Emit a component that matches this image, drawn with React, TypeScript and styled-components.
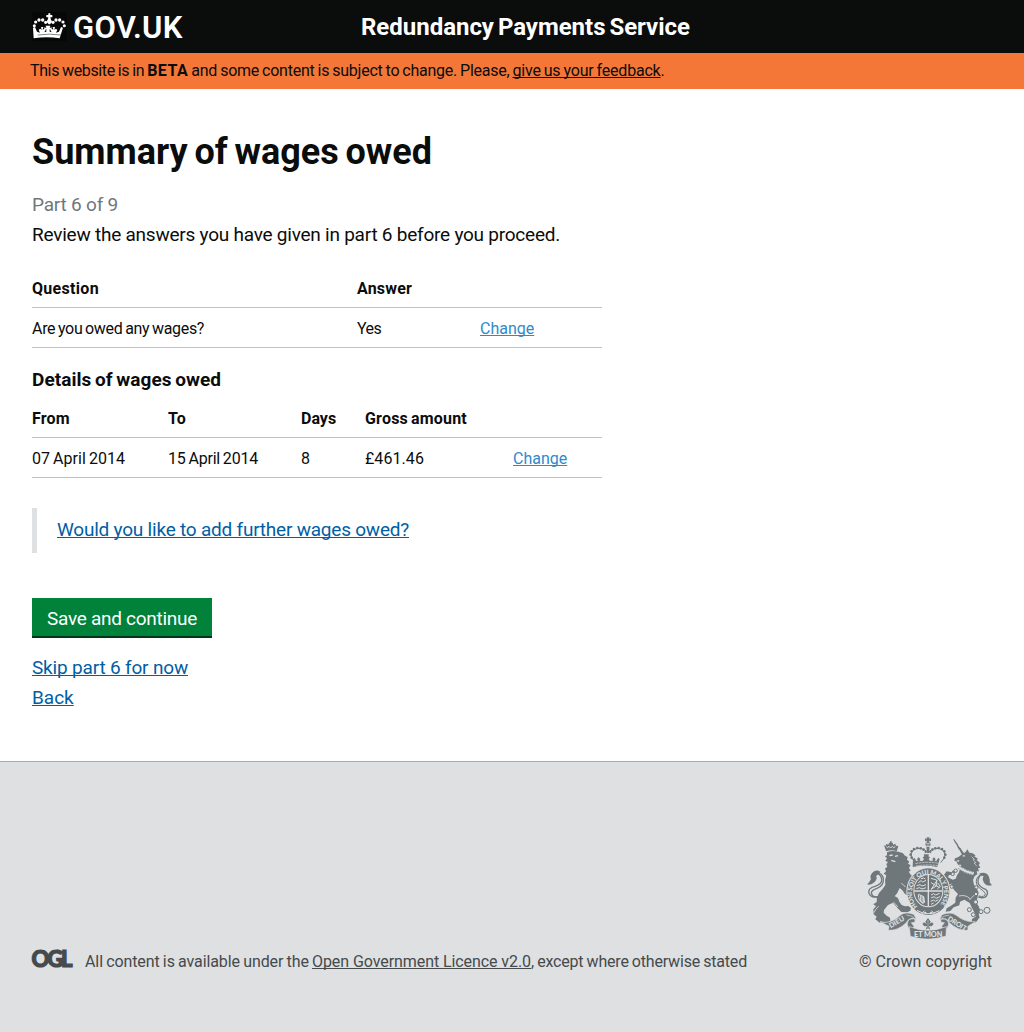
import React from 'react';
import styled, { createGlobalStyle } from 'styled-components';

const INK = '#0b0c0c';
const FONT = 'Roboto, "Liberation Sans", Arial, sans-serif';

const GlobalStyle = createGlobalStyle`
  * { box-sizing: border-box; }
  html { background: #dee0e2; }
  body { margin: 0; background: #fff; color: ${INK}; font: 16px/20px ${FONT}; }
  h1, h2, p { margin: 0; }
  a { text-decoration: underline; text-decoration-thickness: 1px; text-decoration-skip-ink: none; text-underline-offset: 1px; }
`;

const Tracked = styled.span<{ $ls?: number; $ws?: number }>`
  letter-spacing: ${(p) => p.$ls ?? 0}px;
  word-spacing: ${(p) => p.$ws ?? 0}px;
  white-space: pre;
`;

const Header = styled.header`
  display: grid;
  grid-template-columns: 329px 1fr;
  height: 53px;
  padding-left: 32px;
  background: ${INK};
  color: #fff;
`;
const Logo = styled.a`
  display: flex;
  gap: 6px;
  padding-top: 12px;
  color: #fff;
  && { text-decoration: none; }
`;
const LogoText = styled.span`
  padding-top: 1px;
  font-size: 31px;
  line-height: 30px;
  font-weight: 600;
  letter-spacing: 0.3px;
`;
const ServiceName = styled.div`
  padding-top: 12px;
  font-size: 24px;
  line-height: 30px;
  font-weight: 700;
`;

const BetaBar = styled.div`
  height: 36px;
  padding: 8px 30px;
  background: #f47738;
  a { color: ${INK}; }
  strong { letter-spacing: 0.45px; }
`;

const Main = styled.main`
  width: 634px;
  height: 672px;
  padding: 43px 0 0 32px;
`;
const Title = styled.h1`
  font-size: 36px;
  line-height: 40px;
`;
const Para = styled.p<{ $muted?: boolean }>`
  font-size: 19px;
  line-height: 30px;
  color: ${(p) => (p.$muted ? '#6f777b' : INK)};
`;
const Intro = styled.div`
  padding: 18px 0;
`;
const Table = styled.table`
  width: 570px;
  table-layout: fixed;
  border-collapse: separate;
  border-spacing: 0;
`;
const Cell = styled.td`
  height: 40px;
  padding: 11px 0 8px;
  border-bottom: 1px solid #bfc1c3;
  text-align: left;
  font-weight: 400;
  vertical-align: top;
  white-space: nowrap;
`;
const HeadCell = styled(Cell)`
  font-weight: 700;
`;
const ChangeLink = styled.a`
  color: #2e8aca;
`;
const SubTitle = styled.h2`
  padding: 22px 0 8px;
  font-size: 19px;
  line-height: 20px;
`;
const Inset = styled.div`
  height: 45px;
  margin: 30px 0 45px;
  padding: 7px 0 0 20px;
  border-left: 5px solid #dee0e2;
  font-size: 19px;
  line-height: 30px;
`;
const BodyLink = styled.a`
  color: #005ea5;
`;
const Button = styled.button`
  display: block;
  width: 180px;
  height: 40px;
  margin: 0 0 15px;
  padding: 4px 0 0 15px;
  border: 0;
  border-bottom: 2px solid #003618;
  background: #00823b;
  color: #fff;
  font: 19px/34px ${FONT};
  text-align: left;
`;

const Footer = styled.footer`
  display: flex;
  justify-content: space-between;
  align-items: flex-end;
  height: 271px;
  padding: 0 32px 59px;
  border-top: 1px solid #a1acb2;
  background: #dee0e2;
  color: #454a4c;
  a { color: #454a4c; }
`;
const Licence = styled.div`
  display: flex;
  align-items: center;
  gap: 12px;
  height: 22px;
`;
const Copyright = styled.div`
  display: flex;
  flex-direction: column;
  align-items: flex-end;
  gap: 13px;
  height: 136px;
`;

const Block = styled.svg`
  display: block;
  flex: none;
`;
const Ogl = styled(Block)`
  margin-bottom: 4px;
  overflow: visible;
`;

const mirror = (cx: number, pts: number[][]) =>
  pts.flatMap(([x, y, r]) => [[x, y, r], [2 * cx - x, y, r]]);

function Crown() {
  const dots = mirror(88, [[43, 77, 4.6], [47, 66, 4.8], [57, 60, 5], [68, 60, 5], [77, 67, 4.8]]);
  return (
    <Block width="35" height="29" viewBox="36 36 105 87">
      <rect x="36" y="36" width="105" height="87" fill="#070707" />
      <g fill="#fff">
        {dots.map(([x, y, r], i) => <circle key={i} cx={x} cy={y} r={r} />)}
        <path d="M85 40h6v5h6v7h-6l2 7q4 3 2 8l-5 6h-4l-5-6q-2-5 2-8l2-7h-6v-7h6z" />
        <path d="M39 83l6-2 6 14 9 3-4-8 4-4 5 3-2-8h7l-2 8 5-3 4 4-4 7 6-2v-7l-6 2v-8l6 2-2-7h14l-2 7 6-2v8l-6-2v7l6 2-4-7 4-4 5 3-2-8h7l-2 8 5-3 4 4-4 8 9-3 6-14 6 2-10 32q-39-7-78 0z" />
      </g>
      <path d="M53 105q35-5 70 0" fill="none" stroke="#0b0c0c" strokeWidth="1.5" />
    </Block>
  );
}

function OglMark() {
  return (
    <Ogl width="41" height="18" viewBox="0 0 41 18">
      <text x="-0.4" y="16.4" fontFamily="Lato, sans-serif" fontWeight="900" fontSize="22" textLength="41" lengthAdjust="spacing" fill="#454a4c" stroke="#454a4c" strokeWidth="1.2">OGL</text>
    </Ogl>
  );
}

function Arms() {
  const G = '#6f777b';
  const L = '#dee0e2';
  const arch = mirror(219, [[170, 98, 4], [167, 89, 4], [170, 79, 4], [177, 72, 4], [187, 69, 4], [197, 70, 4], [206, 74, 4], [212, 81, 3.5]]);
  const motto = { fontFamily: 'Lato, sans-serif', fontWeight: 900, fill: L };
  return (
    <Block width="125" height="102" viewBox="36 36 375 306" fill={G}>
      <defs>
        <path id="garter" d="M188 245A48 55 0 1 1 250 245" />
      </defs>

      {/* lion */}
      <path d="M93 77L87 61l6 1 1-6 6 3 2-6h3v-4h5v4h3l2 6 6-3 2 6 7 1-5 16q-15-6-32 0z" />
      <path d="M94 65l4 3 4-4 5 5 5-5 4 4 5-3" fill="none" stroke={L} strokeWidth="3" />
      <path d="M96 82Q112 74 132 81L143 84 150 92 158 96 156 104 163 110 159 116 167 121 162 128 167 137 161 140 168 150 176 157 165 162 172 169 180 177 171 180 177 189 166 185 162 190 168 195 173 202 163 204 160 212 150 207 142 196 134 189Q128 205 119 214Q131 217 132 229L140 240 150 244 160 243 168 249 166 257 157 262 139 261 127 248 114 233 99 240 87 255 86 263 95 272 105 278 106 287 98 292 84 291 74 293 61 283 65 275 56 268 55 253 63 244 55 238 65 231 66 218Q70 203 82 193L91 180Q88 165 94 151L86 146 93 139 90 130 97 126 94 117 99 112 91 107 96 100 90 94 96 91z" />
      <path d="M57 263q4-12 14-19M115 231q8 6 13 15M151 186q-6-8-12-11" fill="none" stroke={L} strokeWidth="2.5" />
      <path d="M103 92l10-2M120 94l9-2M109 106l12 4" stroke={L} strokeWidth="4" />
      <path d="M71 214Q48 221 42 205Q37 190 60 184Q82 177 80 163Q78 147 65 145Q53 147 54 160" fill="none" stroke={G} strokeWidth="4" />
      <path d="M71 216Q50 218 49 203Q51 195 66 190Q87 183 85 161Q81 143 65 143" fill="none" stroke={G} strokeWidth="4" />
      <path d="M76 140Q63 132 52 143Q43 153 48 162Q43 174 36 178Q48 182 58 172Q69 160 63 153Q73 147 76 140z" />

      {/* unicorn */}
      <path d="M294 41l5 3 5 8 4 5 4 8 5 5 5 8 7 9-8 2-7-13-5-6-4-10-5-7-4-8z" />
      <path d="M321 88L332 81 337 73 343 83 351 84 362 91 358 94 369 101 365 105 375 114 371 119 376 128 369 130 372 139 365 139 367 148 359 153 354 165 357 179 365 190 371 203 367 220 363 232 371 244 376 257 371 268 374 277 363 292 350 293 351 282 362 275 358 262 351 249 344 234 328 224 315 230 313 241 296 247 286 258 272 260 275 250 288 242 301 233 302 218 309 207 298 196 291 185 278 194 268 187 276 176 281 170 267 162 267 149 275 139 290 142 294 136 302 141 292 149 282 150 279 157 293 164 302 161 306 151 312 142 316 128 319 119 309 119 304 109 298 108 300 100 309 97z" />
      <path d="M311 127q19 13 45 19" fill="none" stroke={L} strokeWidth="10" />
      <path d="M309 130q20 14 47 19M313 123q18 13 45 19" fill="none" stroke={G} strokeWidth="2.5" strokeDasharray="5 3" />
      <path d="M323 93l5-3 1 4zM306 107l6-1-2 5zM350 95l8 8-4 1 9 9-6 1 9 10" fill="none" stroke={L} strokeWidth="2" />
      <path d="M287 153l9 2M281 181l9-4M312 213q20-5 33 8M343 225l20-20" fill="none" stroke={L} strokeWidth="2.5" />
      <path d="M370 216Q393 223 397 207Q400 195 385 190Q367 181 369 166Q372 149 384 148Q395 148 393 159" fill="none" stroke={G} strokeWidth="4" />
      <path d="M371 213Q390 218 391 206Q386 197 376 191Q360 179 365 162Q371 147 386 148" fill="none" stroke={G} strokeWidth="3" />
      <path d="M372 146Q392 138 401 153Q406 166 404 172L411 181Q394 184 387 173Q380 162 386 154Q377 153 372 146z" />
      <g fill={L} stroke={G} strokeWidth="3">
        <circle cx="302" cy="137" r="5" /><circle cx="293" cy="147" r="5" /><circle cx="290" cy="185" r="5" />
        <circle cx="364" cy="187" r="5" /><circle cx="363" cy="207" r="5" /><circle cx="362" cy="231" r="6" />
        <circle cx="343" cy="254" r="6" /><circle cx="355" cy="269" r="6" /><circle cx="378" cy="260" r="6" /><circle cx="396" cy="256" r="9" />
      </g>

      {/* royal crown */}
      <path d="M215 37h9l-2 5 6-2v9l-6-2 1 4q6 4 3 11h-14q-3-7 3-11l1-4-6 2v-9l6 2z" />
      <path d="M213 55h13M219 55v7" stroke={L} strokeWidth="2" />
      <path d="M181 113Q158 89 176 75Q197 62 219 82Q241 62 262 75Q280 89 257 113" fill="none" stroke={G} strokeWidth="3" />
      {arch.map(([x, y, r], i) => <circle key={i} cx={x} cy={y} r={r} />)}
      <path d="M214 65h10l-2 19h-6z" />
      <path d="M174 103l4-5 6 10 5-1-3-5 5-5 5 5-2 5 8 1 5-5-4-6 5-3-2-6h16l-2 6 5 3-4 6 5 5 8-1-2-5 5-5 5 5-3 5 5 1 6-10 4 5-7 23q-37-7-74 0z" />
      <path d="M181 116q38-8 76 0M183 123q36-6 72 0" fill="none" stroke={L} strokeWidth="2" strokeDasharray="8 2" />

      {/* garter and shield */}
      <ellipse cx="220" cy="200" rx="66" ry="73" fill={L} />
      <ellipse cx="220" cy="200" rx="63" ry="70" />
      <ellipse cx="220" cy="197" rx="45" ry="50" fill={L} />
      <ellipse cx="220" cy="197" rx="42" ry="47" />
      <text {...motto} fontSize="19"><textPath href="#garter" textLength="245">HONI SOIT QUI MAL Y PENSE</textPath></text>
      <path d="M220 150v94M178 198h84" stroke={L} strokeWidth="4" />
      <g fill="none" stroke={L} strokeWidth="3">
        <path d="M190 173l8-6 5 4 10-5M185 182l10-3 6 4 12-4M184 191l9-3 8 4 12-4M198 161l8-2 5 3" />
        <path d="M228 160l17 5v17l-17 11M229 193l17-27M228 173l26 15M247 192l9-8-8-10" />
        <path d="M190 208q-1 20 15 28M191 208l15 7 3 18M196 211v18M201 213v21M205 215v20" />
        <path d="M228 210l8-4 6 4 12-5M228 219l9-4 6 5 12-5M227 229l9-4 5 4 9-5M228 238l8-4" />
      </g>
      <path d="M186 256q32 20 67 1M200 267l8-10M238 267l-8-10" stroke={L} fill="none" strokeWidth="3" />
      <circle cx="211" cy="263" r="3" fill={L} /><circle cx="228" cy="263" r="3" fill={L} />

      {/* ribbon */}
      <g stroke={L} strokeWidth="2">
        <path d="M159 288Q166 278 181 283L179 292 169 293 177 304 168 321 161 309Q154 298 159 288z" />
        <path d="M279 288Q270 278 256 283L259 292 268 293 260 304 269 321 276 309Q284 298 279 288z" />
        <path d="M75 290Q105 299 136 271Q150 258 176 268L184 282Q164 274 153 294Q130 317 100 316L102 304z" />
        <path d="M361 290Q331 293 304 271Q287 258 261 269L254 283Q273 275 284 294Q308 317 338 316L340 303z" />
        <path d="M163 305Q219 327 274 305L273 333Q219 351 166 334z" />
      </g>
      <path d="M154 270q14 0 24 9M283 270q-15 1-24 9" fill="none" stroke={L} strokeWidth="2" />
      <text {...motto} fontSize="21" transform="translate(107 310) rotate(-30)" textLength="50">DIEU</text>
      <text {...motto} fontSize="22" x="177" y="336" textLength="85">ET MON</text>
      <text {...motto} fontSize="21" transform="translate(276 285) rotate(32)" textLength="63">DROIT</text>
      <path d="M219 279l8 11-4 7 8-5 5 5-6 7-8-1 4 11-7-4-7 4 4-11-8 1-6-7 5-5 8 5-4-7z" />
      <path d="M219 285v24" stroke={L} strokeWidth="1.5" />
    </Block>
  );
}

export default function App() {
  return (
    <>
      <GlobalStyle />
      <Header>
        <Logo><Crown /><LogoText>GOV.UK</LogoText></Logo>
        <ServiceName><Tracked $ls={-0.02} $ws={-2}>Redundancy Payments Service</Tracked></ServiceName>
      </Header>
      <BetaBar>
        <Tracked $ls={-0.37} $ws={-0.6}>This website is in </Tracked>
        <strong>BETA</strong>
        <Tracked $ls={-0.25} $ws={-0.65}> and some content is subject to change. Please, </Tracked>
        <a><Tracked $ls={-0.2} $ws={-0.7}>give us your feedback</Tracked></a>.
      </BetaBar>
      <Main>
        <Title><Tracked $ws={-2.1}>Summary of wages owed</Tracked></Title>
        <Intro>
          <Para $muted><Tracked $ls={-0.2}>Part 6 of 9</Tracked></Para>
          <Para><Tracked $ls={-0.234}>Review the answers you have given in part 6 before you proceed.</Tracked></Para>
        </Intro>
        <Table>
          <colgroup><col width="325" /><col width="123" /><col width="122" /></colgroup>
          <tbody>
            <tr>
              <HeadCell as="th"><Tracked $ls={0.3}>Question</Tracked></HeadCell>
              <HeadCell as="th"><Tracked $ls={0.18}>Answer</Tracked></HeadCell>
              <HeadCell />
            </tr>
            <tr>
              <Cell><Tracked $ls={-0.31} $ws={-1}>Are you owed any wages?</Tracked></Cell>
              <Cell><Tracked $ls={-0.5}>Yes</Tracked></Cell>
              <Cell><ChangeLink>Change</ChangeLink></Cell>
            </tr>
          </tbody>
        </Table>
        <SubTitle><Tracked $ls={0.05} $ws={-1.1}>Details of wages owed</Tracked></SubTitle>
        <Table>
          <colgroup><col width="136" /><col width="133" /><col width="64" /><col width="148" /><col width="89" /></colgroup>
          <tbody>
            <tr>
              <HeadCell as="th"><Tracked $ls={0.2}>From</Tracked></HeadCell>
              <HeadCell as="th"><Tracked $ls={0.2}>To</Tracked></HeadCell>
              <HeadCell as="th">Days</HeadCell>
              <HeadCell as="th"><Tracked $ls={0.2} $ws={-1.2}>Gross amount</Tracked></HeadCell>
              <HeadCell />
            </tr>
            <tr>
              <Cell><Tracked $ls={0.04} $ws={-1}>07 April 2014</Tracked></Cell>
              <Cell><Tracked $ls={-0.19} $ws={-1}>15 April 2014</Tracked></Cell>
              <Cell>8</Cell>
              <Cell><Tracked $ls={0.07}>£461.46</Tracked></Cell>
              <Cell><ChangeLink>Change</ChangeLink></Cell>
            </tr>
          </tbody>
        </Table>
        <Inset><BodyLink><Tracked $ls={-0.219}>Would you like to add further wages owed?</Tracked></BodyLink></Inset>
        <Button><Tracked $ls={-0.28}>Save and continue</Tracked></Button>
        <Para><BodyLink><Tracked $ls={-0.176}>Skip part 6 for now</Tracked></BodyLink></Para>
        <Para><BodyLink>Back</BodyLink></Para>
      </Main>
      <Footer>
        <Licence>
          <OglMark />
          <div>
            <Tracked $ls={-0.1} $ws={-0.61}>All content is available under the </Tracked>
            <a><Tracked $ls={-0.076}>Open Government Licence v2.0</Tracked></a>
            <Tracked $ls={-0.19} $ws={-0.6}>, except where otherwise stated</Tracked>
          </div>
        </Licence>
        <Copyright>
          <Arms />
          <div><Tracked $ls={0.03}>© Crown copyright</Tracked></div>
        </Copyright>
      </Footer>
    </>
  );
}
